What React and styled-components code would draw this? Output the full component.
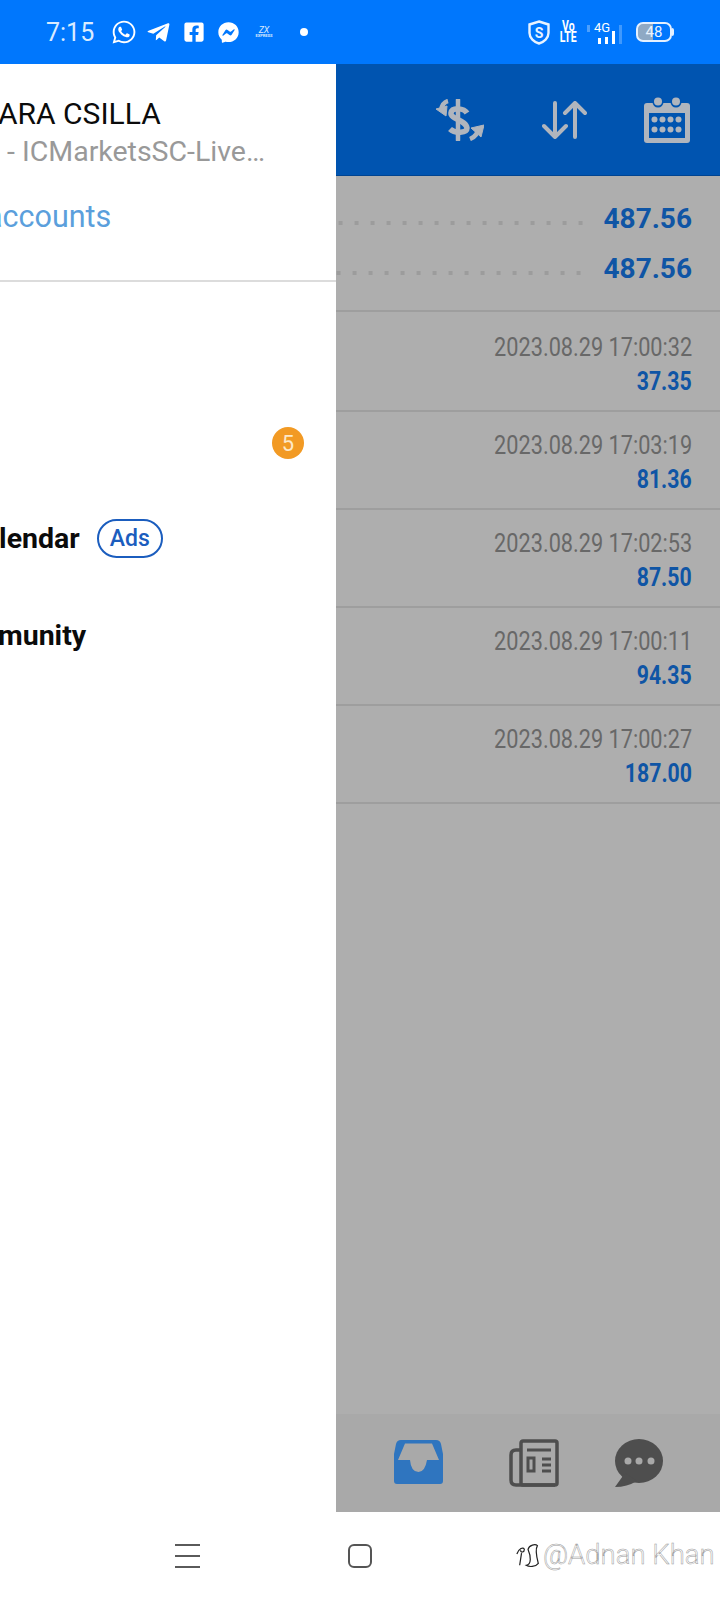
import React from "react";
import styled, { createGlobalStyle } from "styled-components";
import {
  FaWhatsapp,
  FaTelegramPlane,
  FaFacebookSquare,
  FaFacebookMessenger,
} from "react-icons/fa";

const GlobalStyle = createGlobalStyle`
  html, body {
    margin: 0;
    padding: 0;
    background: #ffffff;
    font-family: Roboto, "Liberation Sans", sans-serif;
  }
`;

const Phone = styled.div`
  width: 720px;
  height: 1600px;
  display: flex;
  flex-direction: column;
  overflow: hidden;
`;

/* status bar */
const StatusBar = styled.div`
  height: 64px;
  flex: none;
  background: #0077fd;
  display: flex;
  align-items: center;
  justify-content: space-between;
  padding: 0 46px 0 46px;
  color: #ffffff;
`;

const StatusGroup = styled.div`
  display: flex;
  align-items: center;
`;

const Clock = styled.span`
  font-size: 25px;
  color: #d9ebff;
  width: 46px;
  margin-right: 19px;
`;

const StatusIcon = styled.span`
  display: flex;
  align-items: center;
  margin-right: ${(p) => p.$gap || 0}px;
`;

const ZxLogo = styled.span`
  display: flex;
  flex-direction: column;
  align-items: center;
  width: 18px;
  line-height: 1;
  margin-right: 27px;
  color: #d8e8ff;
`;

const ZxMark = styled.span`
  font-size: 9px;
  font-style: italic;
  line-height: 8px;
`;

const ZxWord = styled.span`
  font-size: 4px;
  font-weight: 700;
  line-height: 4px;
`;

const StatusDot = styled.span`
  width: 8px;
  height: 8px;
  border-radius: 50%;
  background: #ffffff;
`;

const VoLte = styled.span`
  display: flex;
  flex-direction: column;
  align-items: center;
  font-size: 14px;
  font-weight: 700;
  line-height: 11px;
  transform: scaleX(0.75);
  margin-right: 9px;
`;

const Network = styled.span`
  position: relative;
  width: 36px;
  height: 24px;
  margin-right: 11px;
  display: flex;
  align-items: flex-end;
  gap: 4px;
  padding-left: 9px;
  box-sizing: border-box;

  &::before {
    content: "";
    position: absolute;
    left: -2px;
    top: 5px;
    width: 3px;
    height: 7px;
    background: rgba(255, 255, 255, 0.3);
  }
`;

const NetLabel = styled.span`
  position: absolute;
  left: 5px;
  top: 1px;
  font-size: 13px;
  line-height: 13px;
`;

const SignalBar = styled.span`
  width: 3px;
  height: ${(p) => p.$h}px;
  background: ${(p) => (p.$off ? "rgba(255,255,255,0.25)" : "#ffffff")};
`;

const Battery = styled.span`
  width: 36px;
  height: 20px;
  border: 2px solid #e4f0ff;
  border-radius: 7px;
  box-sizing: border-box;
  overflow: hidden;
  display: flex;
  align-items: center;
  justify-content: center;
  background: linear-gradient(to right, #8fa9c4 48%, transparent 48%);
  font-size: 15px;
  color: #e9f3ff;
`;

const BatteryTip = styled.span`
  width: 2px;
  height: 8px;
  background: #e4f0ff;
  border-radius: 0 2px 2px 0;
`;

/* main area */
const Main = styled.div`
  flex: 1;
  display: flex;
  min-height: 0;
`;

const Drawer = styled.aside`
  width: 336px;
  flex: none;
  background: #ffffff;
  overflow: hidden;
  display: flex;
  flex-direction: column;
`;

const Profile = styled.div`
  height: 218px;
  flex: none;
  box-sizing: border-box;
  border-bottom: 2px solid #dcdcdc;
  padding-top: 32px;
`;

const Name = styled.div`
  font-size: 30px;
  line-height: 36px;
  color: #0b0b0b;
  margin-left: -2px;
  white-space: nowrap;
`;

const Server = styled.div`
  font-size: 28.5px;
  line-height: 36px;
  margin-top: 2px;
  margin-left: 7px;
  color: #999999;
  white-space: nowrap;
`;

const ManageLink = styled.div`
  font-size: 30.5px;
  line-height: 38px;
  margin-top: 28px;
  margin-left: -14px;
  color: #5b9fdc;
  white-space: nowrap;
`;

const Menu = styled.nav`
  padding-top: 17px;
`;

const MenuRow = styled.div`
  height: 96px;
  box-sizing: border-box;
  display: flex;
  align-items: center;
  padding-right: 32px;
  padding-bottom: ${(p) => p.$raise || 0}px;
`;

const MenuLabel = styled.span`
  font-size: 28.5px;
  font-weight: 700;
  color: #0b0b0b;
  white-space: nowrap;
  margin-left: ${(p) => p.$shift}px;
`;

const Badge = styled.span`
  width: 32px;
  height: 32px;
  border-radius: 50%;
  margin-left: auto;
  background: #f29a24;
  color: #fde9c8;
  font-size: 22px;
  display: flex;
  align-items: center;
  justify-content: center;
`;

const AdsPill = styled.span`
  width: 66px;
  height: 39px;
  box-sizing: border-box;
  margin-left: 17px;
  border: 2px solid #1b5dbe;
  border-radius: 20px;
  color: #1b5dbe;
  font-size: 23px;
  font-weight: 500;
  display: flex;
  align-items: center;
  justify-content: center;
`;

/* dimmed screen behind the drawer */
const Backdrop = styled.section`
  flex: 1;
  min-width: 0;
  display: flex;
  flex-direction: column;
  background: #aeaeae;
`;

const Header = styled.header`
  height: 112px;
  flex: none;
  box-sizing: border-box;
  background: #0054b0;
  border-bottom: 1px solid #004491;
  display: flex;
  align-items: center;
  justify-content: flex-end;
  padding: 0 30px 0 0;
`;

const HeaderIcon = styled.span`
  display: flex;
  margin-left: ${(p) => p.$gap}px;
`;

const Summary = styled.div`
  height: 136px;
  flex: none;
  box-sizing: border-box;
  border-bottom: 2px solid #9e9e9e;
  padding: 17px 28px 0 0;
`;

const SummaryRow = styled.div`
  height: 50px;
  display: flex;
  align-items: center;
`;

const Leader = styled.span`
  flex: 1;
  height: 4px;
  margin: 10px ${(p) => p.$gap}px 0 0;
  background-image: linear-gradient(to right, transparent 12px, #9c9c9c 12px);
  background-size: 16px 4px;
  background-position: right center;
  background-repeat: repeat-x;
`;

const SummaryValue = styled.span`
  font-size: 28px;
  font-weight: 700;
  color: #0f55a5;
`;

const Deal = styled.div`
  height: ${(p) => (p.$first ? 100 : 98)}px;
  flex: none;
  box-sizing: border-box;
  border-bottom: 2px solid #9e9e9e;
  padding: ${(p) => (p.$first ? 19 : 17)}px 28px 0 0;
  display: flex;
  flex-direction: column;
  align-items: flex-end;
`;

const DealTime = styled.span`
  font-size: 25px;
  line-height: 34px;
  color: #686868;
  white-space: nowrap;
  transform: scaleX(0.868);
  transform-origin: right center;
`;

const DealValue = styled.span`
  font-size: 25px;
  line-height: 33px;
  font-weight: 700;
  color: #0f55a5;
  transform: scaleX(0.85);
  transform-origin: right center;
`;

const Spacer = styled.div`
  flex: 1;
`;

const TabBar = styled.div`
  height: 98px;
  flex: none;
  background: #a9a9a9;
  display: flex;
  align-items: center;
  padding-left: 58px;
`;

const Tab = styled.span`
  display: flex;
  margin-left: ${(p) => p.$gap || 0}px;
  margin-top: ${(p) => p.$lift || 0}px;
`;

/* android nav bar */
const NavBar = styled.div`
  position: relative;
  height: 88px;
  flex: none;
  background: #ffffff;
  display: flex;
  align-items: center;
  padding-left: 175px;
`;

const MenuLines = styled.span`
  width: 25px;
  height: 24px;
  display: flex;
  flex-direction: column;
  justify-content: space-between;
  margin-right: 148px;
`;

const MenuLine = styled.span`
  height: 2px;
  background: #5a5a5a;
`;

const HomeSquare = styled.span`
  width: 24px;
  height: 24px;
  box-sizing: border-box;
  border: 2px solid #555555;
  border-radius: 6px;
`;

const Watermark = styled.div`
  position: absolute;
  left: 515px;
  top: 26px;
  display: flex;
  align-items: center;
`;

const WatermarkText = styled.span`
  font-size: 27.5px;
  font-weight: 300;
  color: #ffffff;
  -webkit-text-stroke: 0.5px #9a9a9a;
  white-space: nowrap;
`;

const DollarSwapIcon = () => (
  <svg width="50" height="42" viewBox="0 0 50 42" fill="none" stroke="#b0b5bd">
    <path d="M24 1V41" strokeWidth="4.5" strokeLinecap="round" />
    <path d="M33 14C30 9 18 8 17 14C16 20 32 21 33 29C33 34 21 35 16 30" strokeWidth="5.5" />
    <path d="M14 2C10 3 8 6 7 11" strokeWidth="4.5" />
    <path d="M2 10L12 17L13 7Z" fill="#b0b5bd" strokeWidth="1" />
    <path d="M36 40C41 38 44 34 44 29" strokeWidth="4.5" />
    <path d="M37 29L50 26L47 38Z" fill="#b0b5bd" strokeWidth="1" />
  </svg>
);

const SwapArrowsIcon = () => (
  <svg width="46" height="38" viewBox="-1 -1 46 38" fill="none" stroke="#b0b5bd" strokeWidth="4" strokeLinecap="round" strokeLinejoin="round">
    <path d="M12 1V35M1 24L12 35L23 24" />
    <path d="M32 35V1M22 11L32 1L42 11" />
  </svg>
);

const CalendarIcon = () => (
  <svg width="46" height="46" viewBox="0 0 46 46">
    <rect x="0" y="6" width="46" height="40" rx="3" fill="#b0b5bd" />
    <rect x="5" y="16" width="36" height="25" fill="#0054b0" />
    <circle cx="14" cy="5" r="5.5" fill="#0054b0" />
    <circle cx="32" cy="5" r="5.5" fill="#0054b0" />
    <circle cx="14" cy="4.5" r="4" fill="#b0b5bd" />
    <circle cx="32" cy="4.5" r="4" fill="#b0b5bd" />
    {[10.5, 18.5, 26.5, 34.5].map((x) => (
      <g key={x} fill="#b0b5bd">
        <circle cx={x} cy="22.5" r="3" />
        <circle cx={x} cy="32.5" r="3" />
      </g>
    ))}
  </svg>
);

const InboxIcon = () => (
  <svg width="49" height="44" viewBox="0 0 49 44">
    <path
      fillRule="evenodd"
      fill="#2f75bf"
      d="M7 0H42Q46 0 47 4L49 14V41Q49 44 46 44H3Q0 44 0 41V14L2 4Q3 0 7 0ZM4 20H16Q17 32 24.5 32Q31 32 33 20H45L38 3.5H11Z"
    />
  </svg>
);

const NewsIcon = () => (
  <svg width="50" height="48" viewBox="0 0 50 48" fill="none" stroke="#4e4e4e" strokeWidth="3.5">
    <rect x="12" y="2" width="36" height="44" rx="2" />
    <path d="M12 11H7Q2 11 2 16V41Q2 46 7 46H46" />
    <path d="M18 11H42M33 20H42M33 26H42M33 32H42" strokeWidth="3" />
    <rect x="19" y="19" width="6" height="13" strokeWidth="3" />
  </svg>
);

const ChatIcon = () => (
  <svg width="48" height="48" viewBox="0 0 48 48">
    <ellipse cx="24" cy="22" rx="24" ry="22" fill="#4e4e4e" />
    <path d="M10 34L0 48Q12 48 22 42Z" fill="#4e4e4e" />
    <circle cx="13" cy="22" r="3.5" fill="#a9a9a9" />
    <circle cx="24" cy="22" r="3.5" fill="#a9a9a9" />
    <circle cx="36" cy="22" r="3.5" fill="#a9a9a9" />
  </svg>
);

const ShieldIcon = () => (
  <svg width="22" height="25" viewBox="0 0 22 25">
    <path d="M11 1.5L20.5 4.5V13C20.5 18 16 22 11 23.5C6 22 1.5 18 1.5 13V4.5Z" fill="none" stroke="#e8f3ff" strokeWidth="2.4" />
    <text x="11" y="17.5" textAnchor="middle" fontSize="14" fontWeight="700" fill="#e8f3ff">S</text>
  </svg>
);

const SquiggleLogo = () => (
  <svg width="28" height="30" viewBox="0 0 30 30" fill="none" stroke="#222222" strokeWidth="1.3">
    <path d="M2 14C4 8 9 6 10 9C10 12 6 13 6 10M7 13L5 26" />
    <path d="M12 26C18 25 17 16 14 9C15 4 22 3 24 5C21 10 24 20 25 24C22 28 15 28 12 26Z" />
  </svg>
);

const deals = [
  { time: "2023.08.29 17:00:32", value: "37.35" },
  { time: "2023.08.29 17:03:19", value: "81.36" },
  { time: "2023.08.29 17:02:53", value: "87.50" },
  { time: "2023.08.29 17:00:11", value: "94.35" },
  { time: "2023.08.29 17:00:27", value: "187.00" },
];

const App = () => {
  return (
    <Phone>
      <GlobalStyle />
      <StatusBar>
        <StatusGroup>
          <Clock>7:15</Clock>
          <StatusIcon $gap={9}><FaWhatsapp size={26} /></StatusIcon>
          <StatusIcon $gap={12}><FaTelegramPlane size={25} /></StatusIcon>
          <StatusIcon $gap={13}><FaFacebookSquare size={22} /></StatusIcon>
          <StatusIcon $gap={16}><FaFacebookMessenger size={21} /></StatusIcon>
          <ZxLogo>
            <ZxMark>ZX</ZxMark>
            <ZxWord>EXPRESS</ZxWord>
          </ZxLogo>
          <StatusDot />
        </StatusGroup>
        <StatusGroup>
          <StatusIcon $gap={7}><ShieldIcon /></StatusIcon>
          <VoLte>
            <span>Vo</span>
            <span>LTE</span>
          </VoLte>
          <Network>
            <NetLabel>4G</NetLabel>
            <SignalBar $h={6} />
            <SignalBar $h={7} />
            <SignalBar $h={13} />
            <SignalBar $h={19} $off />
          </Network>
          <Battery>48</Battery>
          <BatteryTip />
        </StatusGroup>
      </StatusBar>

      <Main>
        <Drawer>
          <Profile>
            <Name>ARA CSILLA</Name>
            <Server>- ICMarketsSC-Live…</Server>
            <ManageLink>accounts</ManageLink>
          </Profile>
          <Menu>
            <MenuRow />
            <MenuRow>
              <Badge>5</Badge>
            </MenuRow>
            <MenuRow $raise={2}>
              <MenuLabel $shift={-31}>calendar</MenuLabel>
              <AdsPill>Ads</AdsPill>
            </MenuRow>
            <MenuRow>
              <MenuLabel $shift={-2}>munity</MenuLabel>
            </MenuRow>
          </Menu>
        </Drawer>

        <Backdrop>
          <Header>
            <HeaderIcon $gap={0}><DollarSwapIcon /></HeaderIcon>
            <HeaderIcon $gap={58}><SwapArrowsIcon /></HeaderIcon>
            <HeaderIcon $gap={56}><CalendarIcon /></HeaderIcon>
          </Header>
          <Summary>
            <SummaryRow>
              <Leader $gap={21} />
              <SummaryValue>487.56</SummaryValue>
            </SummaryRow>
            <SummaryRow>
              <Leader $gap={23} />
              <SummaryValue>487.56</SummaryValue>
            </SummaryRow>
          </Summary>
          {deals.map((deal, i) => (
            <Deal key={deal.time} $first={i === 0}>
              <DealTime>{deal.time}</DealTime>
              <DealValue>{deal.value}</DealValue>
            </Deal>
          ))}
          <Spacer />
          <TabBar>
            <Tab $lift={-2}><InboxIcon /></Tab>
            <Tab $gap={66}><NewsIcon /></Tab>
            <Tab $gap={56}><ChatIcon /></Tab>
          </TabBar>
        </Backdrop>
      </Main>

      <NavBar>
        <MenuLines>
          <MenuLine />
          <MenuLine />
          <MenuLine />
        </MenuLines>
        <HomeSquare />
        <Watermark>
          <SquiggleLogo />
          <WatermarkText>@Adnan Khan</WatermarkText>
        </Watermark>
      </NavBar>
    </Phone>
  );
};

export default App;
